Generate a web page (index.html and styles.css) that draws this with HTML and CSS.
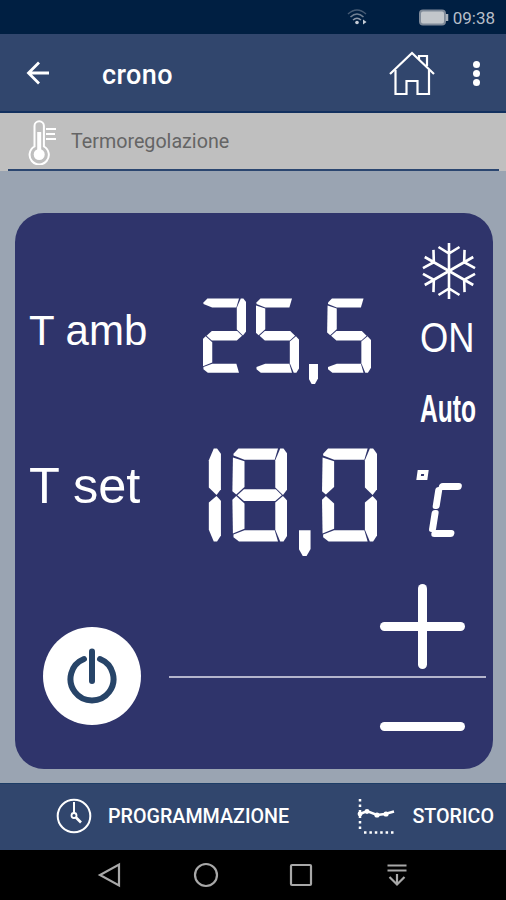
FILE: index.html
```html
<!DOCTYPE html>
<html lang="it">
<head>
    <meta charset="UTF-8">
    <meta name="viewport" content="width=device-width, initial-scale=1.0">
    <title>crono</title>
    <link rel="stylesheet" href="styles.css">
</head>
<body>

    <!-- Barra di stato -->
    <div class="status-bar">
        <svg class="wifi" width="22" height="18" viewBox="0 0 22 18" fill="none" stroke="#8c98a8" stroke-width="1.5">
            <path d="M1 6 Q10 -2 19 6" opacity=".5"/>
            <path d="M3.500 9 Q10 3 16.500 9" opacity=".8"/>
            <path d="M6 12 Q10 8.500 14 12"/>
            <circle cx="10" cy="14.500" r="1.800" fill="#c5ccd6" stroke="none"/>
            <path d="M16 11.500 L19.500 14 L16 16.500 Z" fill="#c5ccd6" stroke="none"/>
        </svg>
        <svg class="battery" width="30" height="17" viewBox="0 0 30 17">
            <rect x="1" y="1.500" width="25" height="14" rx="3" fill="#c2c6cb" stroke="#7f8a99" stroke-width="2"/>
            <path d="M28 5 V12" stroke="#aab1bb" stroke-width="2.500"/>
        </svg>
        <span class="time">09:38</span>
    </div>

    <!-- Barra del titolo -->
    <div class="app-bar">
        <svg class="back" width="26" height="24" viewBox="0 0 26 24" fill="none" stroke="#fff" stroke-width="2.800">
            <path d="M24 12 H4 M14 1.500 L3.500 12 L14 22.500"/>
        </svg>
        <h1>crono</h1>
        <svg class="home" width="46" height="46" viewBox="0 0 46 46" fill="none" stroke="#fff" stroke-width="2.200">
            <path d="M1 24 L23 3 L45 24"/>
            <path d="M6.500 20 V44 H17.500 V31 H28.500 V44 H40 V20"/>
            <path d="M30 9 V6 H38 V16"/>
        </svg>
        <div class="more">
            <span></span><span></span><span></span>
        </div>
    </div>

    <div class="section-title">
        <svg width="30" height="46" viewBox="0 0 30 46" fill="none" stroke="#fff">
            <path d="M7.500 27.500 V7 a4.700 4.700 0 0 1 9.400 0 V27.500 a9.600 9.600 0 1 1 -9.400 0 Z" stroke-width="2"/>
            <circle cx="12.200" cy="35.500" r="5.500" fill="#fff" stroke="none"/>
            <path d="M12.200 34 V13" stroke-width="4"/>
            <path d="M19 10 H29 M19 15 H28 M19 20 H29" stroke-width="2"/>
        </svg>
        <span>Termoregolazione</span>
    </div>

    <div class="content">
        <div class="panel">
            <div class="top">
                <div class="readings">
                    <div class="reading ambient">
                        <span class="label">T amb</span>
                        <div class="display" role="img" aria-label="25,5">
                            <div class="digit"><i class="a"></i><i class="b"></i><i class="g"></i><i class="e"></i><i class="d"></i></div>
                            <div class="digit"><i class="a"></i><i class="f"></i><i class="g"></i><i class="c"></i><i class="d"></i></div>
                            <div class="comma"></div>
                            <div class="digit"><i class="a"></i><i class="f"></i><i class="g"></i><i class="c"></i><i class="d"></i></div>
                        </div>
                    </div>
                    <div class="reading setpoint">
                        <span class="label">T set</span>
                        <div class="display" role="img" aria-label="18,0">
                            <div class="digit"><i class="b"></i><i class="c"></i></div>
                            <div class="digit"><i class="a"></i><i class="b"></i><i class="c"></i><i class="d"></i><i class="e"></i><i class="f"></i><i class="g"></i></div>
                            <div class="comma"></div>
                            <div class="digit"><i class="a"></i><i class="b"></i><i class="c"></i><i class="d"></i><i class="e"></i><i class="f"></i></div>
                        </div>
                    </div>
                </div>
                <div class="indicators">
                    <svg class="snow" width="58" height="58" viewBox="-29 -29 58 58" fill="none" stroke="#fff" stroke-width="2.600">
                        <g id="arm"><path d="M0 0 V-28 M-10.500 -24 L0 -17.500 L10.500 -24"/></g>
                        <use href="#arm" transform="rotate(60)"/>
                        <use href="#arm" transform="rotate(120)"/>
                        <use href="#arm" transform="rotate(180)"/>
                        <use href="#arm" transform="rotate(240)"/>
                        <use href="#arm" transform="rotate(300)"/>
                    </svg>
                    <span class="state">ON</span>
                    <span class="mode">Auto</span>
                    <div class="unit" role="img" aria-label="°C">
                        <i class="degree"></i>
                        <div class="celsius">
                            <i class="bar"></i><i class="side"></i><i class="side"></i><i class="bar"></i>
                        </div>
                    </div>
                </div>
            </div>

            <div class="controls">
                <div class="power">
                    <svg width="50" height="56" viewBox="0 0 50 56" fill="none" stroke="#274468" stroke-width="6" stroke-linecap="round">
                        <path d="M17 11 A21.500 21.500 0 1 0 33 11"/>
                        <path d="M25 3.500 V33"/>
                    </svg>
                </div>
                <div class="adjust">
                    <div class="plus"></div>
                    <div class="line"></div>
                    <div class="minus"></div>
                </div>
            </div>
        </div>
    </div>

    <!-- Menu inferiore -->
    <div class="tabs">
        <div class="tab schedule">
            <svg width="36" height="36" viewBox="0 0 36 36" fill="none" stroke="#fff">
                <circle cx="18" cy="18" r="16.300" stroke-width="2"/>
                <path d="M18 4 V15" stroke-width="2"/>
                <circle cx="18" cy="17.500" r="2.500" stroke-width="1.800"/>
                <path d="M20 19.500 L25 24.500" stroke-width="2.600"/>
            </svg>
            <span>PROGRAMMAZIONE</span>
        </div>
        <div class="tab history">
            <svg width="38" height="38" viewBox="0 0 38 38" fill="none" stroke="#fff">
                <path d="M3 2 V32" stroke-width="2.500" stroke-dasharray="2.500 3"/>
                <path d="M7 35.500 H37" stroke-width="2.500" stroke-dasharray="2.500 2.900"/>
                <path d="M3 17 L10 14 L20 18 L28 17 L37 14.500" stroke-width="2.500"/>
                <g fill="#fff" stroke="none">
                    <circle cx="3" cy="17" r="2.400"/>
                    <circle cx="10" cy="14.500" r="2.400"/>
                    <circle cx="20" cy="18" r="2.600"/>
                    <circle cx="29" cy="17" r="2.600"/>
                </g>
            </svg>
            <span>STORICO</span>
        </div>
    </div>

    <!-- Tasti di navigazione -->
    <div class="nav-bar">
        <svg width="26" height="26" viewBox="0 0 26 26"><path d="M22 2.500 V23.500 L3 13 Z"/></svg>
        <svg width="26" height="26" viewBox="0 0 26 26"><circle cx="13" cy="13" r="11"/></svg>
        <svg width="26" height="26" viewBox="0 0 26 26"><rect x="3" y="3" width="20" height="20" rx="1"/></svg>
        <svg width="26" height="26" viewBox="0 0 26 26"><path d="M3.500 3.500 H22.500 M3.500 8.500 H22.500 M13 12 V23 M5.500 15 L13 22.500 L20.500 15"/></svg>
    </div>

</body>
</html>
```
FILE: styles.css
```css
* {
    margin: 0;
    padding: 0;
    box-sizing: border-box;
}

body {
    width: 506px;
    height: 900px;
    display: flex;
    flex-direction: column;
    overflow: hidden;
    background-color: #9aa4b2;
    font-family: Roboto, sans-serif;
    color: #fff;
}

svg {
    display: block;
    flex-shrink: 0;
}

/* Barra di stato */
.status-bar {
    height: 34px;
    display: flex;
    align-items: center;
    justify-content: flex-end;
    padding-right: 11px;
    background-color: #001f42;
}

.wifi {
    margin-right: 50px;
}

.battery {
    margin-right: 4px;
}

.time {
    padding-top: 1px;
    font-size: 17px;
    color: #b6bec9;
}

/* Barra del titolo */
.app-bar {
    height: 79px;
    display: flex;
    align-items: center;
    padding: 0 26px 0 25px;
    background-color: #31466d;
    border-bottom: 2px solid #12305f;
}

.app-bar h1 {
    flex: 1;
    margin-left: 51px;
    padding-top: 5px;
    font-size: 27px;
    font-weight: 500;
    letter-spacing: 0.4px;
}

.home {
    margin-right: 38px;
}

.more {
    display: flex;
    flex-direction: column;
    gap: 2px;
    padding-top: 2px;
}

.more span {
    width: 7px;
    height: 7px;
    border-radius: 50%;
    background-color: #fff;
}

.section-title {
    height: 58px;
    display: flex;
    align-items: center;
    padding-left: 27px;
    background: linear-gradient(#2b4670, #2b4670) 8px 100% / 491px 2px no-repeat #bfbfbf;
}

.section-title span {
    margin-left: 14px;
    padding-bottom: 1px;
    font-size: 19.7px;
    color: #656565;
}

/* Pannello */
.content {
    flex: 1;
    padding: 42px 13px 14px 15px;
}

.panel {
    height: 556px;
    border-radius: 29px;
    background-color: #2f346b;
    font-family: "Liberation Sans", Arial, sans-serif;
}

.top {
    height: 371px;
    display: flex;
}

.readings {
    width: 405px;
    padding: 85px 0 0 14px;
    display: flex;
    flex-direction: column;
    flex-shrink: 0;
    gap: 75px;
}

.reading {
    display: flex;
    justify-content: space-between;
}

.ambient {
    width: 342px;
    height: 75px;
}

.setpoint {
    width: 348px;
    height: 94px;
}

.label {
    white-space: nowrap;
}

.ambient .label {
    font-size: 42px;
    line-height: 65px;
}

.setpoint .label {
    font-size: 50.5px;
    line-height: 75px;
}

/* Cifre a sette segmenti */
.display {
    display: flex;
    gap: 0.122em;
}

.ambient .display {
    font-size: 75px;
}

.setpoint .display {
    font-size: 94px;
}

.digit {
    width: 0.585em;
    height: 1em;
    display: grid;
    flex-shrink: 0;
}

.digit i {
    grid-area: 1 / 1;
    background-color: #fff;
}

.digit .a {
    clip-path: polygon(2% 6%, 11% 0.5%, 83% 0.5%, 77% 12.500%, 22% 12.500%, 2% 8%);
}

.digit .b {
    clip-path: polygon(87% 0.5%, 93% 0.5%, 100% 6%, 100% 44%, 92% 50%, 78% 42%, 78% 13%);
}

.digit .c {
    clip-path: polygon(92% 51%, 100% 56%, 100% 93%, 93% 99.5%, 87% 99.5%, 78% 87%, 78% 58%);
}

.digit .d {
    clip-path: polygon(2% 92%, 22% 87.500%, 77% 87.500%, 83% 99.5%, 12% 99.5%, 2% 95%);
}

.digit .e {
    clip-path: polygon(7% 51%, 22% 59%, 22% 86%, 1% 91%, 0 55%);
}

.digit .f {
    clip-path: polygon(1% 10%, 22% 14%, 22% 41.500%, 7% 49.5%, 0 46%);
}

.digit .g {
    clip-path: polygon(9% 50.300%, 21% 44%, 79% 44%, 90% 50.300%, 78% 56.500%, 21% 56.500%);
}

.comma {
    width: 0.125em;
    height: 0.277em;
    margin-top: 0.875em;
    flex-shrink: 0;
    background-color: #fff;
    clip-path: polygon(0 0, 100% 0, 100% 72%, 65% 100%, 35% 100%, 0 72%);
}

/* Indicatori a destra */
.indicators {
    display: flex;
    flex-direction: column;
    align-items: flex-start;
    padding-top: 29px;
}

.state {
    margin-top: 14px;
    font-size: 42px;
    line-height: 48px;
    transform: scaleX(0.865);
    transform-origin: left;
}

.mode {
    margin-top: 23px;
    font-size: 39px;
    font-weight: bold;
    line-height: 48px;
    transform: scaleX(0.63);
    transform-origin: left;
}

.unit {
    display: flex;
    gap: 5px;
    margin-top: 37px;
}

.degree {
    width: 11px;
    height: 10px;
    border: 4px solid #fff;
    transform: skewX(-8deg);
    margin-left: -3px;
}

.celsius {
    width: 27px;
    height: 55px;
    margin-top: 13px;
    margin-left: -1px;
    display: flex;
    flex-direction: column;
    transform: skewX(-9deg);
}

.celsius .bar {
    width: 23px;
    height: 7px;
    margin-left: 3px;
    border-radius: 4px;
    background-color: #fff;
}

.celsius .side {
    width: 7px;
    height: 22px;
    margin-bottom: 1px;
    border-radius: 3px;
    background-color: #fff;
}

.celsius .bar + .side {
    margin-top: -3px;
}

.celsius .side + .bar {
    margin-top: -3px;
}

/* Comandi */
.controls {
    display: flex;
    padding: 0 7px 0 28px;
}

.power {
    width: 98px;
    height: 98px;
    margin-top: 43px;
    display: flex;
    align-items: center;
    justify-content: center;
    border-radius: 50%;
    background-color: #fff;
}

.adjust {
    flex: 1;
    margin-left: 28px;
    display: flex;
    flex-direction: column;
    align-items: flex-end;
}

.plus {
    width: 85px;
    height: 85px;
    margin-right: 21px;
    display: grid;
    place-items: center;
}

.plus::before,
.plus::after {
    content: "";
    grid-area: 1 / 1;
    border-radius: 5px;
    background-color: #fff;
}

.plus::before {
    width: 85px;
    height: 9px;
}

.plus::after {
    width: 9px;
    height: 85px;
}

.line {
    width: 100%;
    height: 2px;
    margin-top: 7px;
    background-color: #b4b5cc;
}

.minus {
    width: 85px;
    height: 9px;
    margin: 44px 21px 0 0;
    border-radius: 5px;
    background-color: #fff;
}

/* Menu inferiore */
.tabs {
    height: 67px;
    display: flex;
    justify-content: space-between;
    padding: 0 12px 2px 56px;
    background-color: #31466d;
    border-top: 1px solid #1d3d66;
}

.tab {
    display: flex;
    align-items: center;
    font-size: 19.7px;
    font-weight: 500;
}

.tab span {
    padding-top: 1px;
}

.schedule svg {
    margin-right: 16px;
}

.history svg {
    margin-right: 17px;
}

/* Tasti di navigazione */
.nav-bar {
    height: 50px;
    display: flex;
    align-items: center;
    justify-content: space-between;
    padding: 0 96px 0 97px;
    background-color: #000;
}

.nav-bar svg {
    fill: none;
    stroke: #a8a8a8;
    stroke-width: 2.2;
}
```
